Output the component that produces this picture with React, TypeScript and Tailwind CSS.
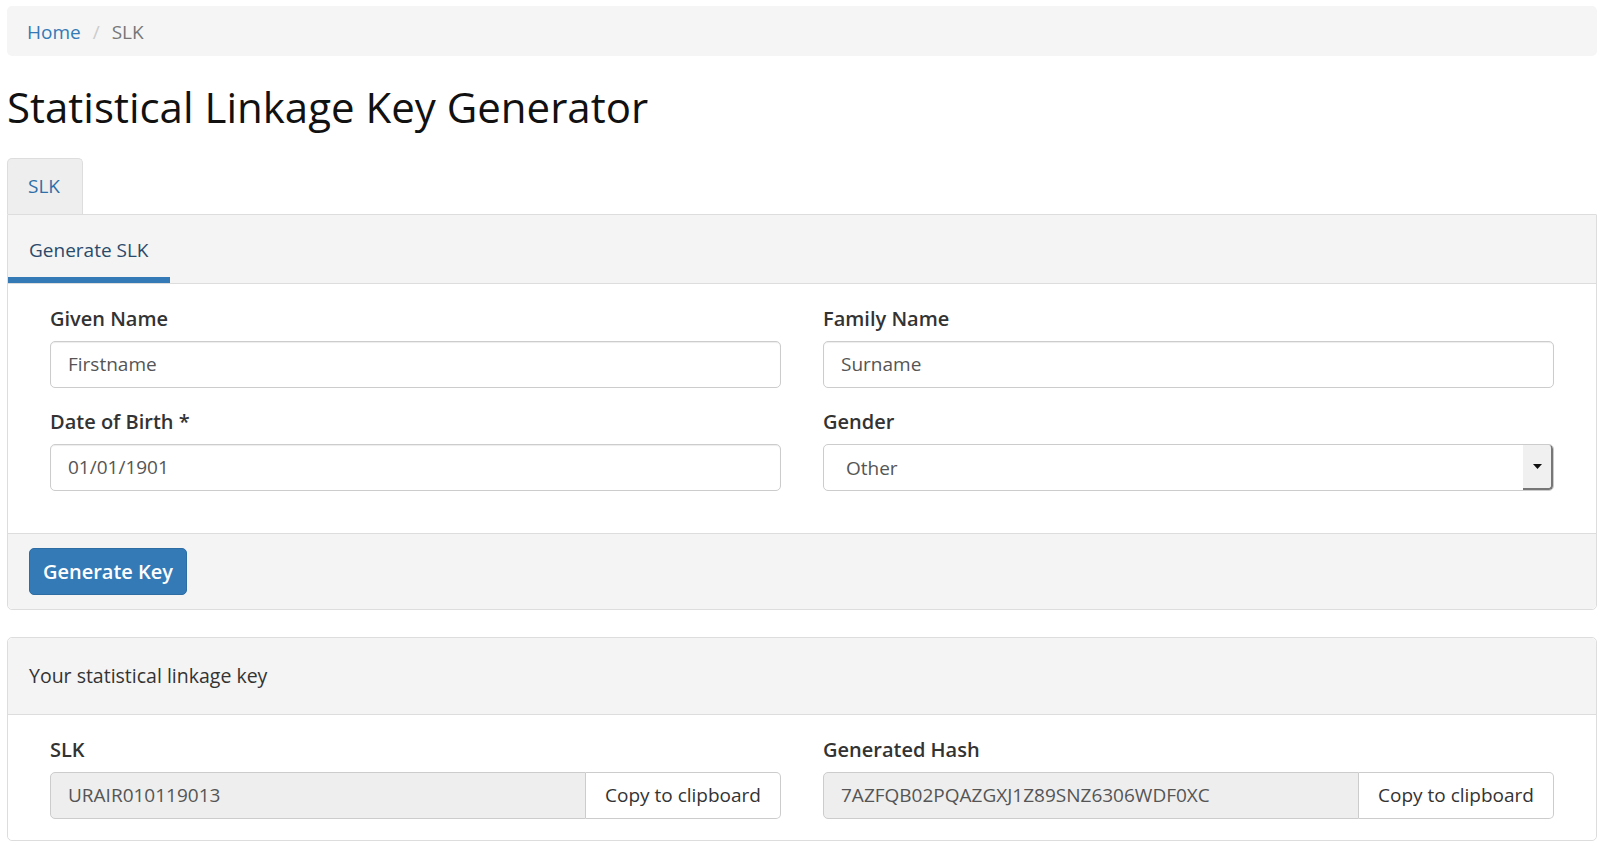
import React from "react";

const font = { fontFamily: '"Open Sans", "Liberation Sans", sans-serif' };

function Field({ label, children }: { label: string; children: React.ReactNode }) {
  return (
    <div className="flex flex-col">
      <label className="text-[20px] font-semibold text-[#333] leading-[27px] mb-[9px]">{label}</label>
      {children}
    </div>
  );
}

function TextInput({ placeholder }: { placeholder: string }) {
  return (
    <div className="h-[47px] border border-[#ccc] rounded-[5px] bg-white flex items-center px-[17px] text-[19px] text-[#555] shadow-[inset_0_1px_1px_rgba(0,0,0,0.075)]">
      {placeholder}
    </div>
  );
}

function CopyGroup({ value }: { value: string }) {
  return (
    <div className="h-[47px] flex">
      <div className="flex-1 border border-[#ccc] rounded-l-[5px] bg-[#eee] flex items-center px-[17px] text-[19px] text-[#555]">
        {value}
      </div>
      <div className="w-[195px] border border-l-0 border-[#ccc] rounded-r-[5px] bg-white flex items-center justify-center text-[19px] text-[#333]">
        Copy to clipboard
      </div>
    </div>
  );
}

export default function App() {
  return (
    <div className="min-h-[852px] bg-white px-[7px] pt-[6px] pr-[11px]" style={font}>
      <div className="h-[50px] rounded-[5px] bg-[#f5f5f5] flex items-center px-[20px] pt-[2px] text-[19px]">
        <span className="text-[#337ab7]">Home</span>
        <span className="text-[#ccc] px-[12px]">/</span>
        <span className="text-[#777]">SLK</span>
      </div>

      <h1 className="text-[42px] leading-[46px] text-[#111] mt-[28px] mb-[28px] font-normal">
        Statistical Linkage Key Generator
      </h1>

      <div className="flex">
        <div className="w-[76px] h-[56px] bg-[#eee] border border-b-0 border-[#ddd] rounded-t-[5px] flex items-center pl-[20px] text-[19px] text-[#2f6ea8]">
          SLK
        </div>
      </div>

      <div className="border border-[#ddd] rounded-b-[5px] rounded-tr-[1px]">
        <div className="h-[69px] bg-[#f4f4f4] border-b border-[#ddd] flex">
          <div className="w-[162px] h-full flex flex-col">
            <div className="flex-1 flex items-center pl-[21px] pt-[8px] text-[19px] text-[#2a4a6b]">Generate SLK</div>
            <div className="h-[6px] bg-[#337ab7]" />
          </div>
        </div>
        <div className="bg-white px-[21px] pt-[21px] pb-[42px]">
          <div className="grid grid-cols-2">
            <div className="px-[21px] flex flex-col gap-[20px]">
              <Field label="Given Name">
                <TextInput placeholder="Firstname" />
              </Field>
              <Field label="Date of Birth *">
                <TextInput placeholder="01/01/1901" />
              </Field>
            </div>
            <div className="px-[21px] flex flex-col gap-[20px]">
              <Field label="Family Name">
                <TextInput placeholder="Surname" />
              </Field>
              <Field label="Gender">
                <div className="h-[47px] border border-[#ccc] rounded-[5px] bg-white flex items-stretch text-[19px] text-[#555] overflow-hidden">
                  <div className="flex-1 flex items-center pl-[22px] pt-[2px]">Other</div>
                  <div className="w-[30px] bg-[#f0f0f0] border-r-[2px] border-b-[2px] border-[#777] flex items-center justify-center rounded-r-[4px]">
                    <svg width="9" height="6" viewBox="0 0 9 6"><path d="M0 0 L9 0 L4.5 5 Z" fill="#111" /></svg>
                  </div>
                </div>
              </Field>
            </div>
          </div>
        </div>
        <div className="bg-[#f4f4f4] border-t border-[#ddd] px-[21px] pt-[14px] pb-[14px] rounded-b-[5px]">
          <button className="h-[47px] w-[158px] rounded-[5px] bg-[#337ab7] border border-[#2e6da4] text-white text-[20px] font-semibold">
            Generate Key
          </button>
        </div>
      </div>

      <div className="mt-[27px] border border-[#ddd] rounded-[5px]">
        <div className="h-[77px] bg-[#f4f4f4] border-b border-[#ddd] flex items-center px-[21px] text-[19.5px] text-[#333] rounded-t-[5px]">
          Your statistical linkage key
        </div>
        <div className="bg-white px-[21px] pt-[21px] pb-[21px] rounded-b-[5px]">
          <div className="grid grid-cols-2">
            <div className="px-[21px]">
              <Field label="SLK">
                <CopyGroup value="URAIR010119013" />
              </Field>
            </div>
            <div className="px-[21px]">
              <Field label="Generated Hash">
                <CopyGroup value="7AZFQB02PQAZGXJ1Z89SNZ6306WDF0XC" />
              </Field>
            </div>
          </div>
        </div>
      </div>
    </div>
  );
}
